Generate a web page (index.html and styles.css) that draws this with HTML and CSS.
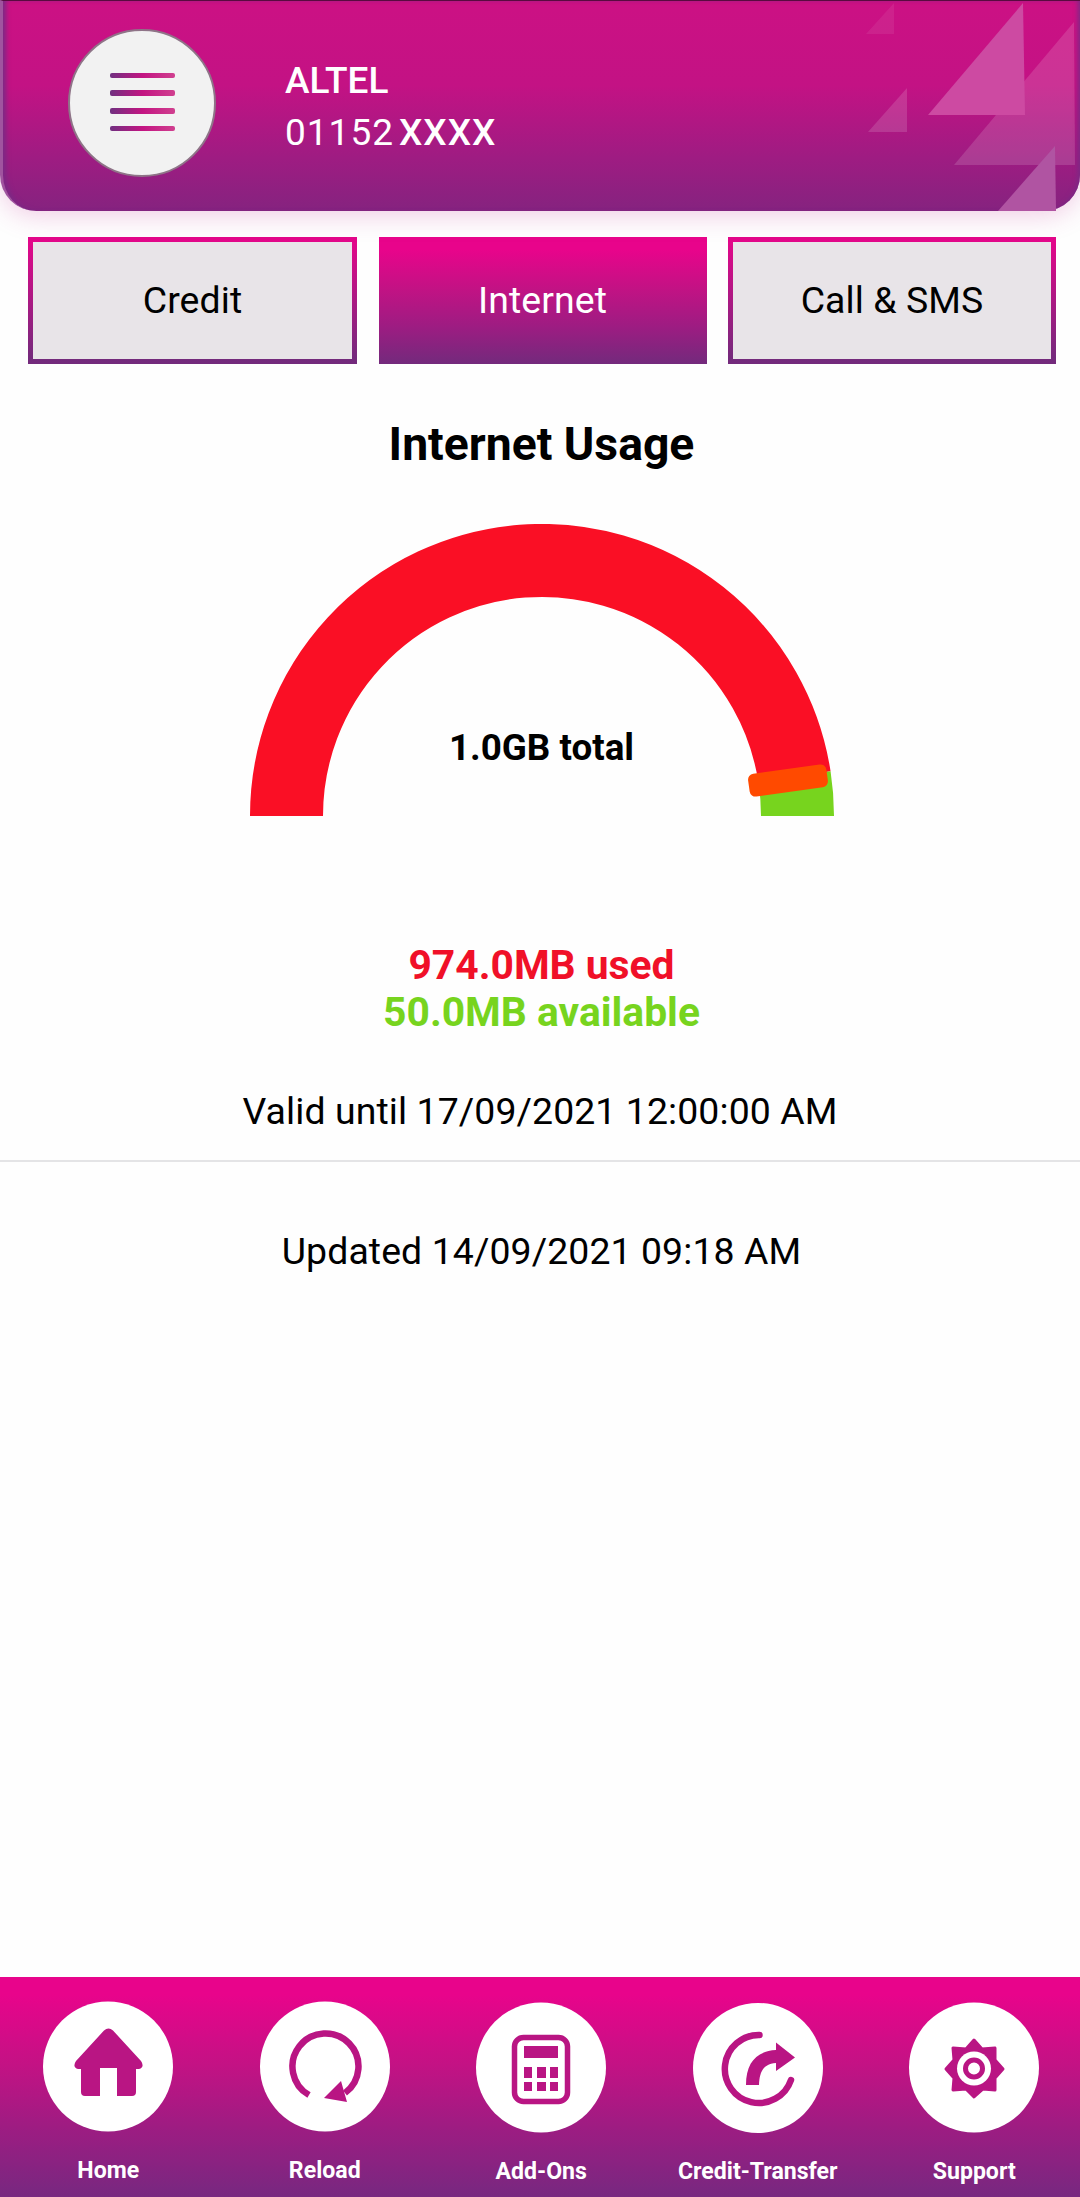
FILE: index.html
```html
<!DOCTYPE html>
<html lang="en">
<head>
    <meta charset="UTF-8">
    <meta name="viewport" content="width=device-width, initial-scale=1.0">
    <title>Internet Usage</title>
    <link rel="stylesheet" href="styles.css">
</head>
<body>
    <header class="header">
        <!-- Decorative triangles -->
        <svg class="header-art" width="220" height="211" viewBox="0 0 220 211">
            <polygon points="34,3 34,34 6,34" fill="#fff" fill-opacity="0.07"/>
            <polygon points="214,22 215,165 94,165" fill="#fff" fill-opacity="0.14"/>
            <polygon points="163,3 165,115 68,115" fill="#cd4aa2"/>
            <polygon points="47,88 47,132 8,132" fill="#fff" fill-opacity="0.14"/>
            <polygon points="195,146 196,211 138,211" fill="#b054a2"/>
        </svg>
        <button class="menu-button" aria-label="Menu">
            <span class="menu-line"></span>
            <span class="menu-line"></span>
            <span class="menu-line"></span>
            <span class="menu-line"></span>
        </button>
        <div class="account">
            <div class="account-name">ALTEL</div>
            <div class="account-number">01152<span class="masked">XXXX</span></div>
        </div>
    </header>

    <div class="tabs">
        <button class="tab">Credit</button>
        <button class="tab tab-active">Internet</button>
        <button class="tab">Call &amp; SMS</button>
    </div>

    <main class="usage">
        <h1>Internet Usage</h1>
        <div class="gauge">
            <svg width="584" height="292" viewBox="0 0 584 292">
                <path d="M36.5 292A255.5 255.5 0 0 1 544.5 252.9" fill="none" stroke="#fa0f25" stroke-width="73"/>
                <path d="M544.5 252.9A255.5 255.5 0 0 1 547.5 292" fill="none" stroke="#77d41e" stroke-width="73"/>
                <rect x="498.500" y="245" width="79" height="23" rx="6" fill="#ff4a00" transform="rotate(-8 538 256.500)"/>
            </svg>
            <div class="gauge-label">1.0GB total</div>
        </div>
        <div class="amounts">
            <div class="used">974.0MB used</div>
            <div class="available">50.0MB available</div>
        </div>
        <p class="valid">Valid until 17/09/2021 12:00:00 AM</p>
        <p class="updated">Updated 14/09/2021 09:18 AM</p>
    </main>

    <nav class="bottom-nav">
        <a class="nav-item">
            <svg class="nav-icon" viewBox="0 0 130 131">
                <circle cx="65" cy="65.5" r="65" fill="#fff"/>
                <path d="M61 29.500Q65.500 25.500 70 29.500L98 60Q102 66 96 68H93V91Q93 95 89 95H74V67H57V95H42Q38 95 38 91V68H35Q29 66 33 60Z" fill="#b91583"/>
            </svg>
            <span>Home</span>
        </a>
        <a class="nav-item">
            <svg class="nav-icon" viewBox="0 0 130 131">
                <circle cx="65" cy="65.5" r="65" fill="#fff"/>
                <path d="M49 94A33 33 0 1 1 85 92" fill="none" stroke="#b91583" stroke-width="6.500"/>
                <path d="M64 97L81 80L87 101Z" fill="#b91583"/>
            </svg>
            <span>Reload</span>
        </a>
        <a class="nav-item nav-item-low">
            <svg class="nav-icon" viewBox="0 0 130 131">
                <circle cx="65" cy="65.5" r="65" fill="#fff"/>
                <rect x="38.500" y="35.500" width="53" height="64" rx="9" fill="none" stroke="#b91583" stroke-width="5.500"/>
                <path d="M48 44h34v12h-34zM48 65h8v11h-8zM61 65h9v11h-9zM74 65h8v11h-8zM48 80h8v9h-8zM61 80h9v9h-9zM74 80h8v9h-8z" fill="#b91583"/>
            </svg>
            <span>Add-Ons</span>
        </a>
        <a class="nav-item nav-item-low">
            <svg class="nav-icon" viewBox="0 0 130 131">
                <circle cx="65" cy="66" r="65" fill="#fff"/>
                <path d="M66.500 33A34 34 0 1 0 98 78" fill="none" stroke="#b91583" stroke-width="6.500" stroke-linecap="round"/>
                <path d="M53 83C53 60 64 49 83 48V40.500L102 55.500L83 69V61C70 62 66.500 70 66 83Z" fill="#b91583"/>
            </svg>
            <span>Credit-Transfer</span>
        </a>
        <a class="nav-item nav-item-low">
            <svg class="nav-icon" viewBox="0 0 130 131">
                <circle cx="65" cy="65.5" r="65" fill="#fff"/>
                <path d="M65 38L73 47L86 46L86 58L94 67L86 76L86 88L74 87L65 95L57 87L44 88L45 76L37 67L45 58L44 46L57 47Z" fill="#b91583" stroke="#b91583" stroke-width="3" stroke-linejoin="round"/>
                <circle cx="65" cy="66.500" r="17" fill="#fff"/>
                <circle cx="65" cy="66.500" r="8.500" fill="none" stroke="#b91583" stroke-width="5"/>
            </svg>
            <span>Support</span>
        </a>
    </nav>
</body>
</html>
```

FILE: styles.css
```css
* {
    box-sizing: border-box;
}

body {
    font-family: Roboto, sans-serif;
    font-size: 37.4px;
    letter-spacing: 0.1px;
    margin: 0;
    height: 2197px;
    display: flex;
    flex-direction: column;
    background-color: #fefefe;
    color: #000;
    overflow: hidden;
}

button {
    font: inherit;
    letter-spacing: inherit;
    border: none;
    padding: 0;
}

.header {
    position: relative;
    height: 211px;
    flex-shrink: 0;
    display: flex;
    align-items: flex-start;
    padding: 28px 0 0 65px;
    gap: 69px;
    border-top: 1px solid #590a3f;
    border-left: 3px solid #a0549f;
    border-radius: 0 0 36px 36px;
    background: linear-gradient(#cc1184, #c31284 40%, #9e1c82 75%, #85237f);
    box-shadow: inset 5px 0 5px -2px #7a2a85, inset -5px 0 5px -3px #7a2a85, 0 4px 26px rgba(200, 50, 150, 0.25);
    color: #fff;
}

.header-art {
    position: absolute;
    top: -1px;
    right: 0;
}

.menu-button {
    width: 148px;
    height: 148px;
    border: 2px solid #8f7488;
    border-radius: 50%;
    background-color: #f2f2f2;
    display: flex;
    flex-direction: column;
    align-items: center;
    justify-content: center;
    gap: 12px;
    padding-bottom: 2px;
}

.menu-line {
    width: 65px;
    height: 5.6px;
    border-radius: 2px;
    background: linear-gradient(90deg, #703080, #c31482 50%, #d0408f);
}

.account {
    padding-top: 26px;
    font-size: 37px;
    line-height: 52px;
    letter-spacing: 1px;
}

.account-name {
    font-weight: 500;
    letter-spacing: 0;
}

.masked {
    font-weight: 500;
    margin-left: 5px;
}

.tabs {
    display: grid;
    grid-template-columns: 329px 328px 328px;
    gap: 21.5px;
    padding: 26px 0 0 28px;
}

.tab {
    height: 127px;
    border: 5px solid;
    border-image: linear-gradient(#e3078a, #732a7c) 1;
    background-color: #e8e4e8;
    color: #000;
    padding-bottom: 1px;
}

.tab-active {
    border: none;
    background: linear-gradient(#e8048b 10%, #c31284 40%, #9e1c82 70%, #732a7c);
    color: #fff;
}

.usage {
    flex: 1;
    display: flex;
    flex-direction: column;
    align-items: center;
    padding-left: 3px;
}

h1 {
    font-size: 46.3px;
    line-height: 52px;
    letter-spacing: 0;
    margin: 54px 0;
}

.gauge {
    position: relative;
    height: 292px;
}

.gauge svg {
    display: block;
}

.gauge-label {
    position: absolute;
    top: 202px;
    width: 100%;
    text-align: center;
    font-size: 36.8px;
    font-weight: bold;
    letter-spacing: 0;
}

.amounts {
    margin-top: 126px;
    font-size: 40.8px;
    line-height: 47px;
    letter-spacing: 0;
    font-weight: bold;
    text-align: center;
}

.used {
    color: #f01028;
}

.available {
    color: #77d41e;
}

.valid {
    margin: 54px 0 0 -3px;
    padding-bottom: 28px;
    width: 1080px;
    text-align: center;
    line-height: 42px;
    border-bottom: 2px solid #e4e4e6;
}

.updated {
    margin: 68px 0 0;
    line-height: 42px;
}

.bottom-nav {
    height: 220px;
    flex-shrink: 0;
    display: grid;
    grid-template-columns: repeat(5, 216.5px);
    background: linear-gradient(#e8048b 8%, #c31284 40%, #9e1c82 68%, #772880);
    color: #fff;
    font-size: 23.1px;
    letter-spacing: 0;
    font-weight: bold;
}

.nav-item {
    display: flex;
    flex-direction: column;
    align-items: center;
    gap: 25px;
    padding-top: 24px;
    line-height: 28px;
}

.nav-item-low {
    padding-top: 25px;
}

.nav-icon {
    width: 130px;
    height: 131px;
}
```
